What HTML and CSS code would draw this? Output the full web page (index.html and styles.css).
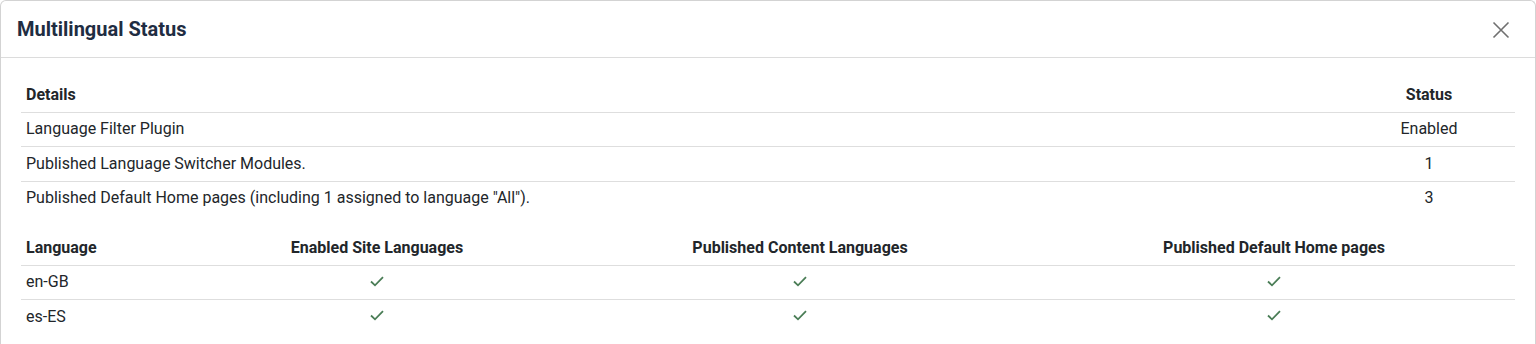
FILE: index.html
```html
<!DOCTYPE html>
<html lang="en">
<head>
<meta charset="utf-8">
<title>Multilingual Status</title>
<link rel="stylesheet" href="styles.css">
</head>
<body>
<div class="modal">
  <div class="modal-header">
    <h3 class="modal-title">Multilingual Status</h3>
    <button class="btn-close" type="button" aria-label="Close">
      <svg width="18" height="18" viewBox="0 0 18 18"><path d="M1.5 1.5L16.5 16.5M16.5 1.5L1.5 16.5" stroke="#707070" stroke-width="1.6" fill="none"/></svg>
    </button>
  </div>
  <div class="modal-body">
    <table class="table">
      <thead>
        <tr><th class="w-details">Details</th><th class="center w-status">Status</th></tr>
      </thead>
      <tbody>
        <tr><td>Language Filter Plugin</td><td class="center">Enabled</td></tr>
        <tr><td>Published Language Switcher Modules.</td><td class="center">1</td></tr>
        <tr><td>Published Default Home pages (including 1 assigned to language "All").</td><td class="center">3</td></tr>
      </tbody>
    </table>
    <table class="table">
      <thead>
        <tr>
          <th class="w-lang">Language</th>
          <th class="center w-site">Enabled Site Languages</th>
          <th class="center w-content">Published Content Languages</th>
          <th class="center w-home">Published Default Home pages</th>
        </tr>
      </thead>
      <tbody>
        <tr>
          <td>en-GB</td>
          <td class="center"><svg class="check" width="14" height="11" viewBox="0 0 14 11"><path d="M1 5.5L5 9.3L13 1.2" stroke="#4a7d56" stroke-width="1.8" fill="none"/></svg></td>
          <td class="center"><svg class="check" width="14" height="11" viewBox="0 0 14 11"><path d="M1 5.5L5 9.3L13 1.2" stroke="#4a7d56" stroke-width="1.8" fill="none"/></svg></td>
          <td class="center"><svg class="check" width="14" height="11" viewBox="0 0 14 11"><path d="M1 5.5L5 9.3L13 1.2" stroke="#4a7d56" stroke-width="1.8" fill="none"/></svg></td>
        </tr>
        <tr>
          <td>es-ES</td>
          <td class="center"><svg class="check" width="14" height="11" viewBox="0 0 14 11"><path d="M1 5.5L5 9.3L13 1.2" stroke="#4a7d56" stroke-width="1.8" fill="none"/></svg></td>
          <td class="center"><svg class="check" width="14" height="11" viewBox="0 0 14 11"><path d="M1 5.5L5 9.3L13 1.2" stroke="#4a7d56" stroke-width="1.8" fill="none"/></svg></td>
          <td class="center"><svg class="check" width="14" height="11" viewBox="0 0 14 11"><path d="M1 5.5L5 9.3L13 1.2" stroke="#4a7d56" stroke-width="1.8" fill="none"/></svg></td>
        </tr>
      </tbody>
    </table>
  </div>
</div>
</body>
</html>
```
FILE: styles.css
```css
html, body {
  margin: 0;
  padding: 0;
  background: #ffffff;
  font-family: Roboto, "Liberation Sans", sans-serif;
  color: #22262a;
}
.modal {
  width: 1536px;
  box-sizing: border-box;
  border: 1px solid #d3d3d3;
  border-bottom: none;
  border-radius: 6px 6px 0 0;
  height: 344px;
  overflow: hidden;
  background: #fff;
}
.modal-header {
  display: flex;
  align-items: center;
  justify-content: space-between;
  height: 57px;
  box-sizing: border-box;
  padding: 0 17px 0 16px;
  border-bottom: 1px solid #dcdcdc;
}
.modal-title {
  margin: 0;
  font-size: 20px;
  font-weight: 700;
  color: #1f2d42;
  line-height: 1.2;
}
.btn-close {
  border: none;
  background: none;
  padding: 0;
  width: 18px;
  height: 18px;
  display: flex;
  margin-right: 8px;
  margin-top: 1px;
}
.modal-body {
  padding: 20px 19px 20px 20px;
}
.table {
  width: 1494px;
  border-collapse: collapse;
  margin-bottom: 16px;
  font-size: 16px;
  line-height: 24px;
}
.table th, .table td {
  padding: 4.75px 5px;
  text-align: left;
  vertical-align: middle;
}
.table th {
  font-weight: 700;
}
.table td {
  border-top: 1px solid #dedede;
}
.table .center {
  text-align: center;
}
.check {
  display: inline-block;
  vertical-align: middle;
  position: relative;
  top: -2px;
}
.w-details { width: 1312px; }
.w-status { width: 162px; }
.w-lang { width: 156px; }
.w-site { width: 370px; }
.w-content { width: 456px; }
.w-home { width: 472px; }
```
